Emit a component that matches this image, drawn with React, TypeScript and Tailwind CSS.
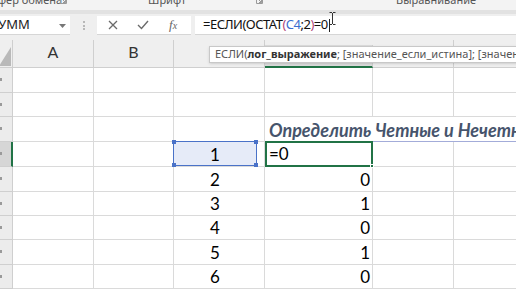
import React from "react";

const rowHeights = [25, 24, 25, 25, 25, 24, 24, 25, 24];
const dValues: Record<number, string> = { 5: "0", 6: "1", 7: "0", 8: "1", 9: "0" };

function Launcher() {
  return (
    <svg width="7" height="7" viewBox="0 0 7 7" className="mt-[-3px]">
      <path d="M0.5 0.5h6v6h-6z" fill="none" stroke="#9a9a9a" strokeWidth="1" />
      <path d="M2 2l3.5 3.5M5.5 3v2.5H3" fill="none" stroke="#9a9a9a" strokeWidth="1" />
    </svg>
  );
}

function RibbonLabels() {
  return (
    <div className="h-[10px] bg-[#f3f3f3] overflow-hidden text-[11px] text-[#555] leading-[11px] font-['Noto_Sans',sans-serif] whitespace-nowrap">
      <div className="flex items-start -mt-[6px]">
        <span className="ml-[-2px] w-[62px] shrink-0">фер обмена</span>
        <span className="mt-[6px] shrink-0"><Launcher /></span>
        <span className="ml-[81px] w-[108px] shrink-0">Шрифт</span>
        <span className="mt-[6px] shrink-0"><Launcher /></span>
        <span className="ml-[133px] shrink-0">Выравнивание</span>
      </div>
    </div>
  );
}

function FormulaBar() {
  return (
    <div className="h-[30px] bg-[#efefef] border-t-[4px] border-[#e2e2e2] pt-[2px] flex items-start font-['Noto_Sans',sans-serif]">
      <div className="w-[70px] h-[19px] bg-white border-b border-[#d6d6d6] flex items-center overflow-hidden relative">
        <span className="text-[13px] text-[#222] ml-[-10px] whitespace-nowrap">СУММ</span>
        <svg width="7" height="4" viewBox="0 0 7 4" className="absolute left-[59px] top-[8px]">
          <path d="M0 0h7L3.5 4z" fill="#777" />
        </svg>
      </div>
      <div className="w-[27px] h-[19px] flex flex-col items-center justify-center gap-[1.5px]">
        <span className="w-[2px] h-[2px] bg-[#b8b8b8]" />
        <span className="w-[2px] h-[2px] bg-[#b8b8b8]" />
        <span className="w-[2px] h-[2px] bg-[#b8b8b8]" />
      </div>
      <div className="w-[94px] h-[19px] bg-white border-b border-[#d6d6d6] flex items-center">
        <svg width="10" height="10" viewBox="0 0 10 10" className="ml-[11px]">
          <path d="M1 1l8 8M9 1l-8 8" stroke="#6a6a6a" strokeWidth="1.3" />
        </svg>
        <svg width="12" height="10" viewBox="0 0 12 10" className="ml-[19px]">
          <path d="M1 5l3.5 3.5L11 1" fill="none" stroke="#6a6a6a" strokeWidth="1.4" />
        </svg>
        <span className="ml-[20px] text-[13px] italic text-[#666] font-['Liberation_Serif',serif]">
          f<span className="text-[10px]">x</span>
        </span>
      </div>
      <div className="ml-[4px] flex-1 h-[19px] bg-white border-b border-[#d6d6d6] flex items-center relative">
        <span className="ml-[8px] text-[13px] text-[#111] whitespace-nowrap tracking-[-0.5px]">
          =ЕСЛИ(ОСТАТ<span className="text-[#b0487c]">(</span>
          <span className="text-[#3b6fd0]">C4</span>;2<span className="text-[#b0487c]">)</span>=0
        </span>
        <span className="ml-[1px] w-[1px] h-[13px] bg-[#222]" />
        <svg width="7" height="13" viewBox="0 0 7 13" className="absolute left-[134px] top-[-4px]">
          <path d="M0.5 0.5h2.5M4 0.5h2.5M3.5 1v11M0.5 12.5h2.5M4 12.5h2.5" stroke="#333" strokeWidth="1" fill="none" />
        </svg>
      </div>
    </div>
  );
}

function Headers() {
  return (
    <div className="h-[28px] grid grid-cols-[13px_81px_80px_91px_108px_81px_1fr] bg-[#efefef] text-[16px] text-[#333] relative">
      <div className="border-r border-b border-[#cfcfcf] relative overflow-hidden">
        <svg width="12" height="19" viewBox="0 0 12 19" className="absolute right-[1px] bottom-[1px]">
          <path d="M12 0V19H0z" fill="#b9b9b9" />
        </svg>
      </div>
      <div className="border-r border-b border-[#cfcfcf] flex items-end justify-center pb-[3px]">A</div>
      <div className="border-r border-b border-[#cfcfcf] flex items-end justify-center pb-[3px]">B</div>
      <div className="border-r border-b border-[#cfcfcf]" />
      <div className="border-r border-b-2 border-b-[#217346] border-r-[#cfcfcf] bg-[#dcdcdc] mt-[5px]" />
      <div className="border-r border-b border-[#cfcfcf]" />
      <div className="border-b border-[#cfcfcf]" />
      <div className="absolute left-[209px] top-[6px] h-[17px] w-[330px] bg-white border border-[#c8c8c8] shadow-sm flex items-center px-[5px] text-[11px] text-[#555] whitespace-nowrap font-['Noto_Sans',sans-serif]">
        ЕСЛИ(<b className="text-[#333]">лог_выражение</b>; [значение_если_истина]; [значение_если_ложь])
      </div>
    </div>
  );
}

function Row({ r, h }: { r: number; h: number }) {
  const line = "border-r border-b border-[#dadada]";
  const active = r === 4;
  return (
    <div className="grid grid-cols-[13px_81px_80px_91px_108px_81px_1fr]" style={{ height: h }}>
      <div
        className={
          active
            ? "border-b border-[#cfcfcf] border-r-2 border-r-[#217346] bg-[#d6d6d6]"
            : "border-r border-b border-[#cfcfcf] bg-[#ececec] relative"
        }
      >
        <span className="block w-[2px] h-[3px] bg-[#9a9a9a] mt-[10px]" />
      </div>
      <div className={line} />
      <div className={line} />
      <div className={`${line} relative flex items-end justify-center pr-[8px] pb-[1px]`}>
        {active && (
          <div className="absolute left-[-1px] top-[-1px] w-[84px] h-[25px] border border-[#4a72c8] bg-[#e6ebf8]">
            <span className="absolute -left-[2px] -top-[2px] w-[4px] h-[4px] bg-[#4a72c8]" />
            <span className="absolute -right-[2px] -top-[2px] w-[4px] h-[4px] bg-[#4a72c8]" />
            <span className="absolute -left-[2px] -bottom-[2px] w-[4px] h-[4px] bg-[#4a72c8]" />
            <span className="absolute -right-[2px] -bottom-[2px] w-[4px] h-[4px] bg-[#4a72c8]" />
          </div>
        )}
        {r >= 4 && <span className="relative">{r - 3}</span>}
      </div>
      {r === 3 ? (
        <div className="col-span-3 border-b border-[#a3acd9] flex items-end pl-[4px] pb-[1px] whitespace-nowrap overflow-hidden text-[18px] font-bold italic text-[#46546c]">
          Определить Четные и Нечетные числа
        </div>
      ) : (
        <>
          {active ? (
            <div className="border-2 border-[#217346] relative flex items-end pl-[2px] pb-[1px] -mt-px">
              =0
              <span className="absolute -right-[3px] -bottom-[3px] w-[4px] h-[4px] bg-[#217346] border border-white" />
            </div>
          ) : (
            <div className={`${line} flex items-end justify-end pr-[2px] pb-[1px]`}>{dValues[r] ?? ""}</div>
          )}
          <div className={line} />
          <div className="border-b border-[#dadada]" />
        </>
      )}
    </div>
  );
}

export default function App() {
  return (
    <div className="w-[516px] h-[289px] overflow-hidden bg-white font-['Lato',sans-serif] text-black select-none">
      <RibbonLabels />
      <FormulaBar />
      <Headers />
      <div className="text-[17px] leading-[20px]">
        {rowHeights.map((h, i) => (
          <Row key={i} r={i + 1} h={h} />
        ))}
      </div>
    </div>
  );
}
